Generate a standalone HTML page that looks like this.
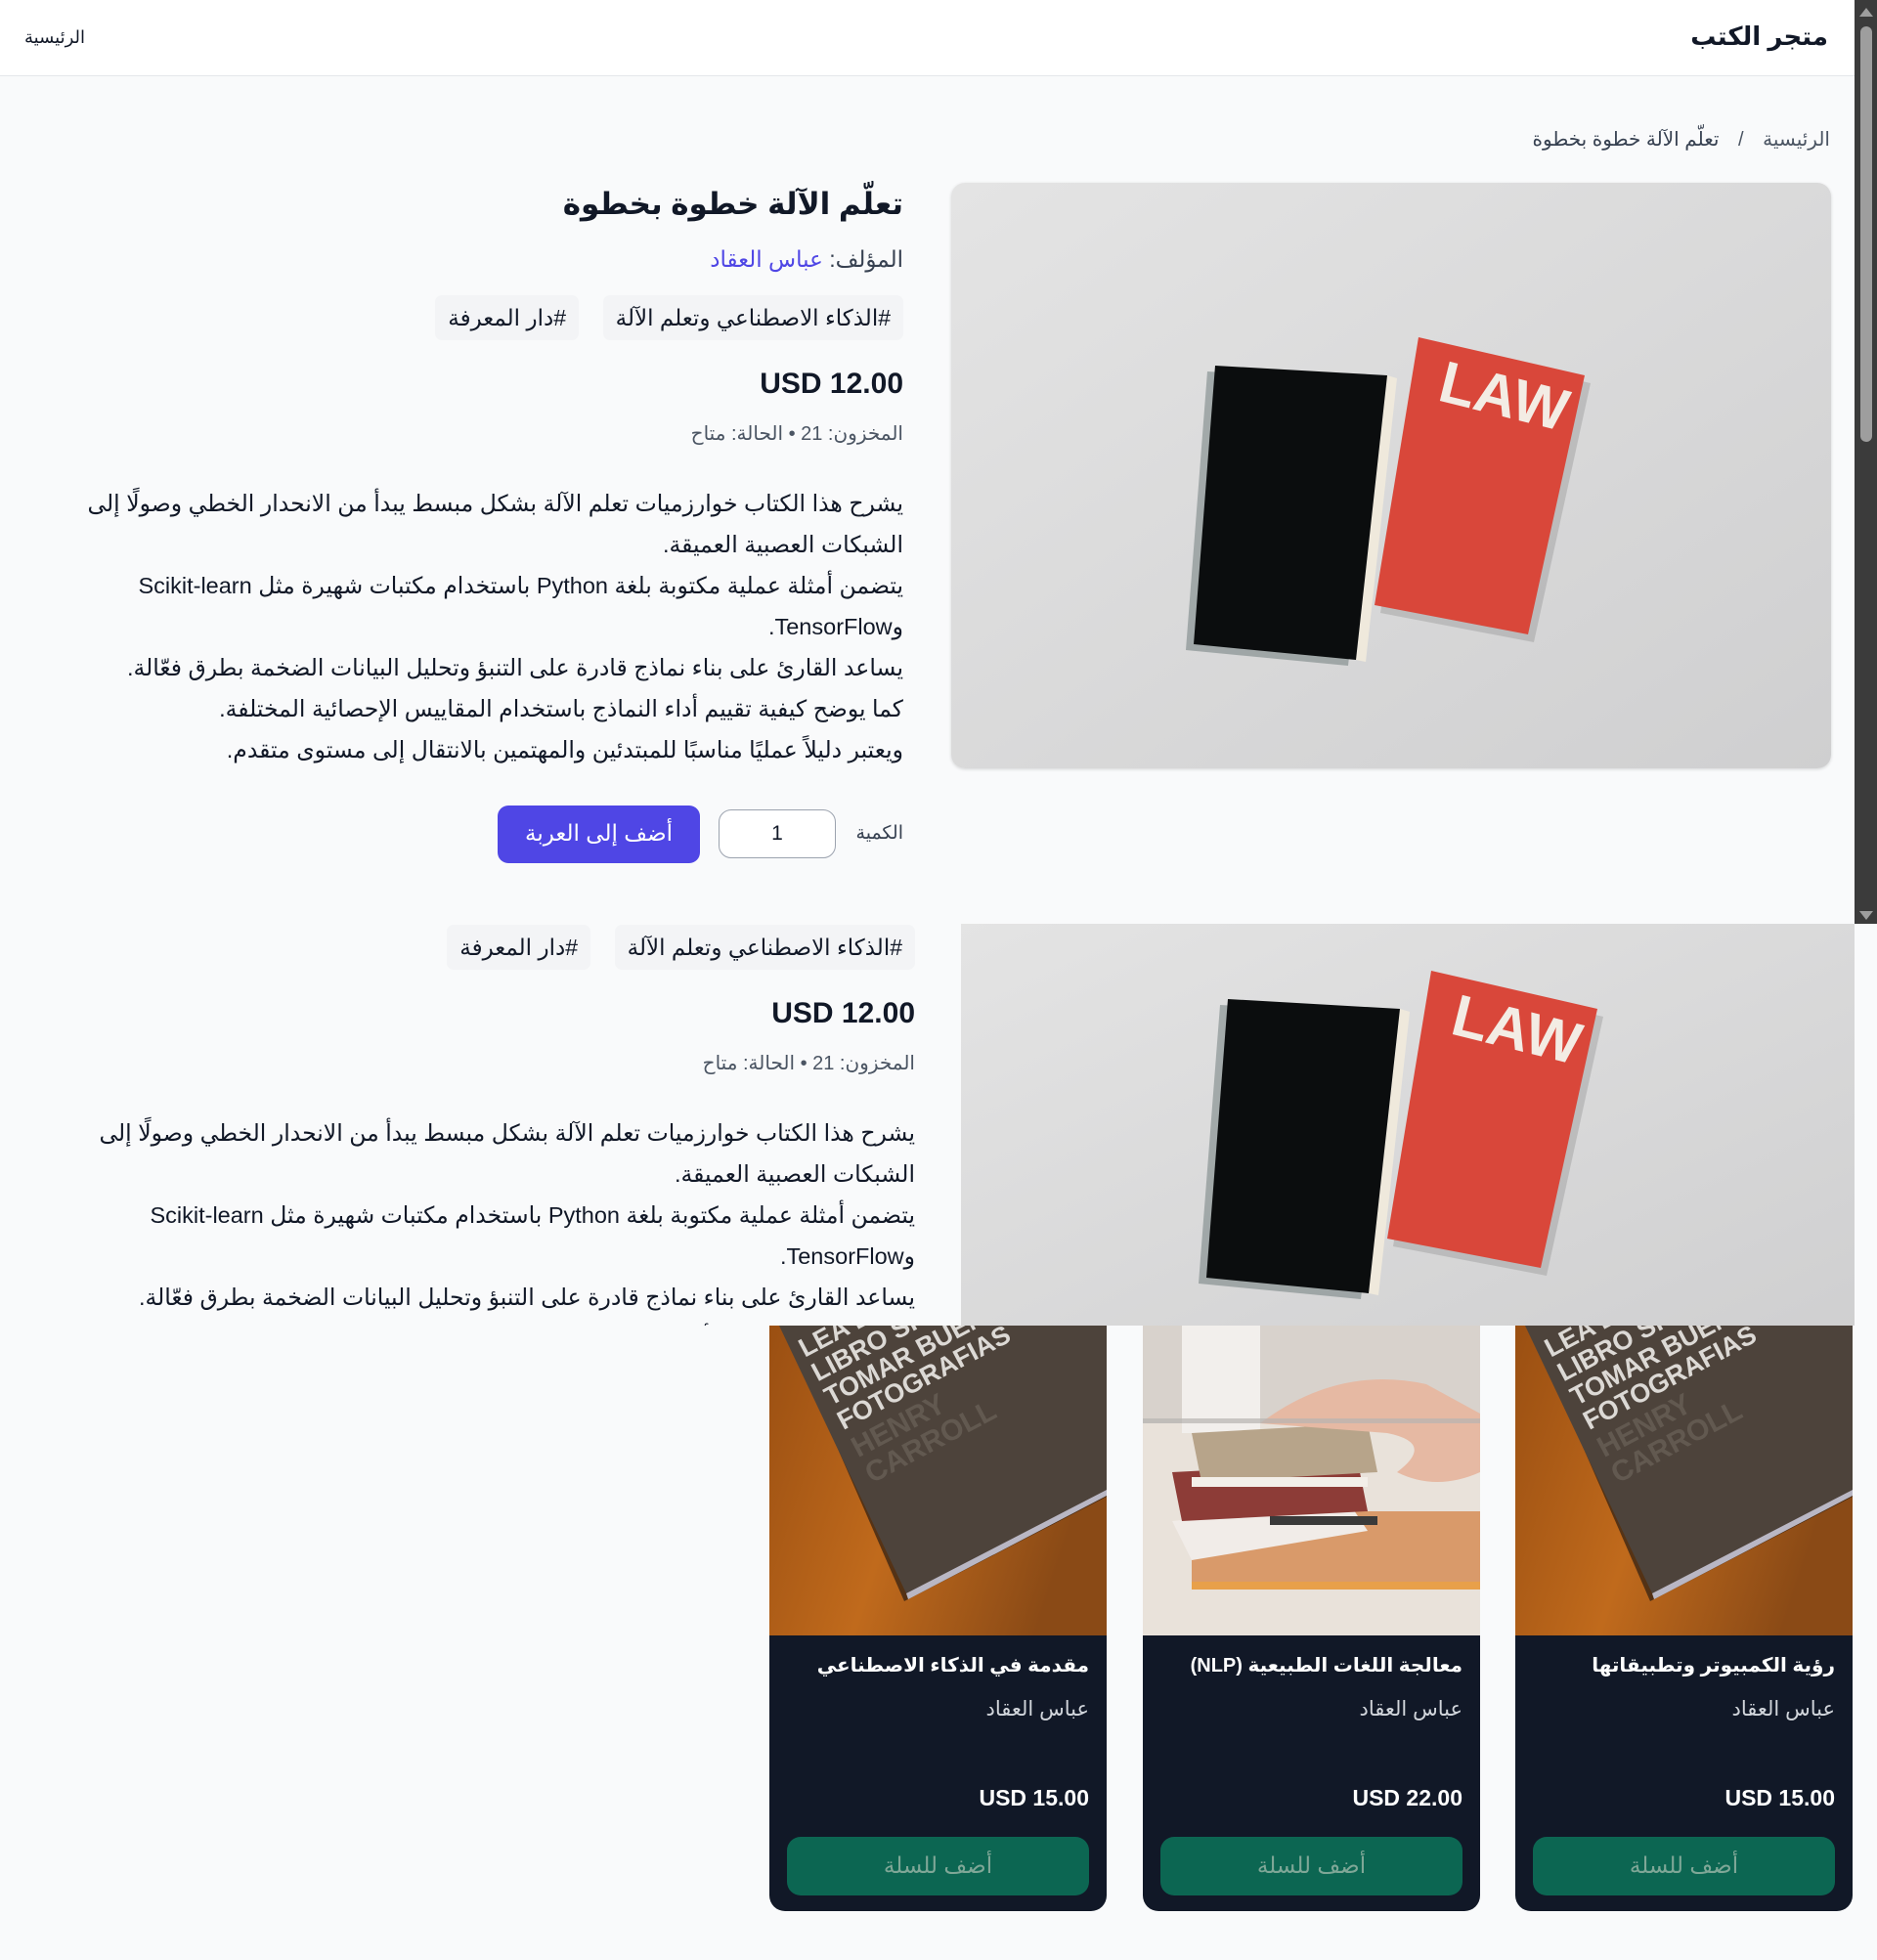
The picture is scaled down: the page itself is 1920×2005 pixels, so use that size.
<!DOCTYPE html>
<html lang="ar" dir="rtl"><head><meta charset="utf-8">
<style>
*{box-sizing:border-box;margin:0;padding:0}
html,body{width:1920px;height:2005px;overflow:hidden}
body{background:#f9fafb;font-family:"Liberation Sans","DejaVu Sans",sans-serif;color:#111827;position:relative}
svg{direction:ltr}
.a{position:absolute}
.hdr{left:0;top:0;width:1897px;height:78px;background:#fff;border-bottom:1px solid #e5e7eb}
.t{white-space:nowrap;direction:rtl}
.tag{background:#f3f4f6;border-radius:7px;height:46px;line-height:46px;padding:0 13px;font-size:23px;color:#111827}
.desc{font-size:23.5px;line-height:42px;color:#111827;direction:rtl;text-align:right}
.card{background:#111827;border-radius:0 0 16px 16px;overflow:hidden;width:345px;height:599px;top:1356px}
.card .img{position:absolute;left:0;top:0;width:345px;height:317px;overflow:hidden}
.card .ti{position:absolute;right:18px;top:335px;color:#fff;font-weight:bold;font-size:20px;white-space:nowrap}
.card .au{position:absolute;right:18px;top:380px;color:#d1d5db;font-size:21px}
.card .pr{position:absolute;right:18px;top:470px;color:#fff;font-weight:bold;font-size:23px;direction:ltr}
.card .bt{position:absolute;left:18px;right:18px;top:523px;height:60px;background:#0c6652;border-radius:14px;color:#7fa797;font-size:23px;text-align:center;line-height:58px}
</style></head><body>
<div class="a hdr"></div>
<div class="a t" style="right:50px;top:22px;font-size:26px;font-weight:bold">متجر الكتب</div>
<div class="a t" style="left:25px;top:28px;font-size:18px">الرئيسية</div>
<div class="a" style="left:1897px;top:0;width:23px;height:945px;background:#3b3b3b"></div>
<div class="a" style="left:1903px;top:27px;width:12px;height:425px;background:#9e9e9e;border-radius:6px"></div>
<div class="a" style="left:1902px;top:8px;width:0;height:0;border-left:7px solid transparent;border-right:7px solid transparent;border-bottom:9px solid #9e9e9e"></div>
<div class="a" style="left:1902px;top:932px;width:0;height:0;border-left:7px solid transparent;border-right:7px solid transparent;border-top:9px solid #9e9e9e"></div>

<div class="a t" style="right:48px;top:130px;font-size:20px;color:#4b5563">الرئيسية <span style="margin:0 14px">/</span> <span style="color:#374151">تعلّم الآلة خطوة بخطوة</span></div>

<!-- law image -->
<div class="a" style="left:973px;top:187px;width:900px;height:599px;border-radius:14px;overflow:hidden;box-shadow:0 1px 3px rgba(0,0,0,.15)">
<svg width="900" height="599" viewBox="0 0 900 599"><defs><linearGradient id="bg" x1="0" y1="0" x2="1" y2="1"><stop offset="0" stop-color="#e4e4e4"/><stop offset="1" stop-color="#cfcfd0"/></linearGradient></defs>
<rect width="900" height="599" fill="url(#bg)"/>
<g id="law">
<polygon points="484,166 654,205 596,470 439,440" fill="#8a8a8a" opacity=".35"/>
<polygon points="478,158 648,197 590,462 433,432" fill="#d9473a"/>
<text transform="translate(496,222) rotate(14)" font-family="Liberation Sans" font-weight="bold" font-size="60" fill="#f3ece4" text-anchor="start" direction="ltr">LAW</text>
<polygon points="262,193 438,203 406,494 240,478" fill="#5a6a6a" opacity=".45"/>
<polygon points="446,197 456,200 424,490 414,488" fill="#efe9dc"/>
<polygon points="270,187 446,197 414,488 248,472" fill="#0b0d0e"/>
</g></svg></div>

<div class="a t" style="right:996px;top:191px;font-size:31px;font-weight:bold">تعلّم الآلة خطوة بخطوة</div>
<div class="a t" style="right:996px;top:252px;font-size:23px;color:#374151">المؤلف: <span style="color:#4f46e5">عباس العقاد</span></div>
<div class="a t tag" style="right:996px;top:302px">#الذكاء الاصطناعي وتعلم الآلة</div>
<div class="a t tag" style="right:1328px;top:302px">#دار المعرفة</div>
<div class="a t" style="right:996px;top:376px;font-size:30px;font-weight:bold;direction:ltr">USD 12.00</div>
<div class="a t" style="right:996px;top:431px;font-size:20px;color:#4b5563">المخزون: 21 • الحالة: متاح</div>
<div class="a desc" style="right:996px;top:494px;width:850px">يشرح هذا الكتاب خوارزميات تعلم الآلة بشكل مبسط يبدأ من الانحدار الخطي وصولًا إلى الشبكات العصبية العميقة.<br>يتضمن أمثلة عملية مكتوبة بلغة Python باستخدام مكتبات شهيرة مثل Scikit-learn وTensorFlow.<br>يساعد القارئ على بناء نماذج قادرة على التنبؤ وتحليل البيانات الضخمة بطرق فعّالة.<br>كما يوضح كيفية تقييم أداء النماذج باستخدام المقاييس الإحصائية المختلفة.<br>ويعتبر دليلاً عمليًا مناسبًا للمبتدئين والمهتمين بالانتقال إلى مستوى متقدم.</div>
<div class="a t" style="right:996px;top:841px;font-size:19px;color:#374151">الكمية</div>
<div class="a" style="left:735px;top:828px;width:120px;height:50px;border:1px solid #9ca3af;border-radius:13px;background:#fff;text-align:center;line-height:48px;font-size:21px">1</div>
<div class="a t" style="left:509px;top:824px;width:207px;height:59px;background:#4f46e5;border-radius:11px;color:#fff;font-size:23px;text-align:center;line-height:57px">أضف إلى العربة</div>

<!-- second section -->
<div class="a" style="left:983px;top:945px;width:914px;height:411px;overflow:hidden">
<svg width="914" height="411" viewBox="-3 110 914 411"><rect x="-10" y="100" width="940" height="430" fill="url(#bg)"/><use href="#law"/></svg></div>
<div class="a" style="left:0;top:946px;width:983px;height:410px;overflow:hidden">
<div class="a t tag" style="right:47px;top:0">#الذكاء الاصطناعي وتعلم الآلة</div>
<div class="a t tag" style="right:379px;top:0">#دار المعرفة</div>
<div class="a t" style="right:47px;top:74px;font-size:30px;font-weight:bold;direction:ltr">USD 12.00</div>
<div class="a t" style="right:47px;top:129px;font-size:20px;color:#4b5563">المخزون: 21 • الحالة: متاح</div>
<div class="a desc" style="right:47px;top:192px;width:850px">يشرح هذا الكتاب خوارزميات تعلم الآلة بشكل مبسط يبدأ من الانحدار الخطي وصولًا إلى الشبكات العصبية العميقة.<br>يتضمن أمثلة عملية مكتوبة بلغة Python باستخدام مكتبات شهيرة مثل Scikit-learn وTensorFlow.<br>يساعد القارئ على بناء نماذج قادرة على التنبؤ وتحليل البيانات الضخمة بطرق فعّالة.<br>كما يوضح كيفية تقييم أداء النماذج باستخدام المقاييس الإحصائية المختلفة.</div>
</div>

<!-- cards -->
<svg width="0" height="0" style="position:absolute"><defs>
<linearGradient id="wood" x1="0" y1="0" x2="1" y2="0.3"><stop offset="0" stop-color="#9a4f12"/><stop offset=".5" stop-color="#c06a1c"/><stop offset="1" stop-color="#8a4a16"/></linearGradient>
<g id="bk"><rect width="345" height="317" fill="url(#wood)"/>
<polygon points="15,0 345,0 345,175 138,282" fill="#2a1c12" opacity=".7"/>
<polygon points="10,0 345,0 345,168 140,274" fill="#4d433b"/>
<polygon points="140,274 345,168 345,174 142,280" fill="#b9b7c4"/>
<g transform="translate(40,40) rotate(-28)" font-family="Liberation Sans" font-weight="bold">
<text font-size="27" fill="#dcd9d5" direction="ltr"><tspan x="0" y="-8">LEA EL</tspan><tspan x="0" y="20">LIBRO SI DESEAS</tspan><tspan x="0" y="48">TOMAR BUENAS</tspan><tspan x="0" y="76">FOTOGRAFIAS</tspan></text>
<text font-size="30" fill="#625950" direction="ltr"><tspan x="0" y="108">HENRY</tspan><tspan x="0" y="138">CARROLL</tspan></text></g></g>
</defs></svg>
<div class="a card" style="left:787px"><div class="img"><svg width="345" height="317"><use href="#bk"/></svg></div>
<div class="ti">مقدمة في الذكاء الاصطناعي</div><div class="au">عباس العقاد</div><div class="pr">USD 15.00</div><div class="bt">أضف للسلة</div></div>
<div class="a card" style="left:1169px"><div class="img"><svg width="345" height="317">
<rect width="345" height="317" fill="#e9e2da"/><rect x="0" y="0" width="345" height="100" fill="#d8d2cc"/><rect x="40" y="0" width="80" height="110" fill="#f2efec"/>
<rect x="50" y="190" width="295" height="80" fill="#d99a6a"/><rect x="50" y="262" width="295" height="8" fill="#e8a04a"/>
<polygon points="30,200 210,180 230,210 50,240" fill="#f1ece8"/><polygon points="30,150 220,140 230,190 40,200" fill="#8d3c37"/><polygon points="50,110 230,100 240,150 60,160" fill="#b7a48a"/><rect x="50" y="155" width="180" height="10" fill="#f3efe9"/>
<rect x="130" y="195" width="110" height="9" fill="#3a3a3a"/>
<path d="M120 100 Q200 40 290 60 L345 90 L345 150 Q300 170 260 150 Q300 120 250 110 Z" fill="#e6b9a3"/>
<rect x="0" y="95" width="345" height="5" fill="#b7b3b1" opacity=".7"/></svg></div>
<div class="ti">معالجة اللغات الطبيعية (NLP)</div><div class="au">عباس العقاد</div><div class="pr">USD 22.00</div><div class="bt">أضف للسلة</div></div>
<div class="a card" style="left:1550px"><div class="img"><svg width="345" height="317"><use href="#bk"/></svg></div>
<div class="ti">رؤية الكمبيوتر وتطبيقاتها</div><div class="au">عباس العقاد</div><div class="pr">USD 15.00</div><div class="bt">أضف للسلة</div></div>
</body></html>
